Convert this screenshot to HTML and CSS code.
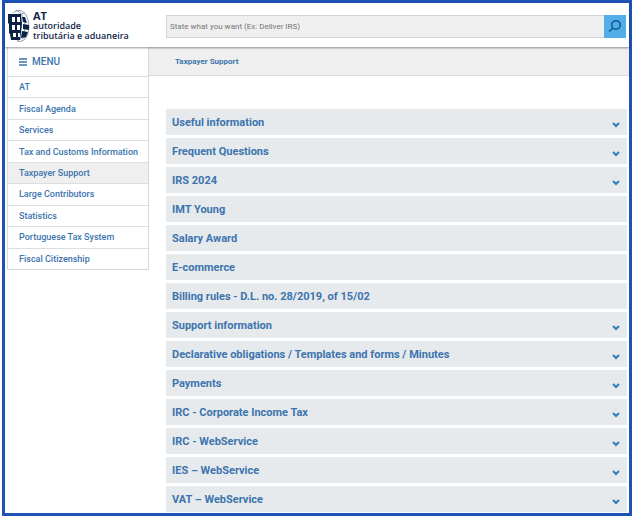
FILE: index.html
```html
<!DOCTYPE html>
<html lang="en">
<head>
    <meta charset="UTF-8">
    <meta name="viewport" content="width=device-width, initial-scale=1.0">
    <title>Taxpayer Support</title>
    <link rel="stylesheet" href="styles.css">
</head>
<body>
<div class="page">

    <header class="header">
        <a class="logo" href="#">
            <svg class="logo-mark" viewBox="0 0 22 34" aria-hidden="true">
                <g fill="none" stroke="#8fa0b5" stroke-width="1">
                    <path d="M5 4 C9 0 15 1 18 6 C22 13 22 24 17 30 C15 32 12 33 9 32"/>
                    <path d="M8 1 C14 4 17 10 17 17 C17 24 14 30 9 32"/>
                    <path d="M12 5 L17 4 M14 30 L19 27"/>
                </g>
                <path d="M0 5 L13 5 L14 15 L13 24 L12 31 L3 31 L2 25 L1 24 L1 15 L0 14 Z" fill="#0d2145"/>
                <path d="M14 8 L17 8 L19 14 L15 13 Z M15 15 L21 16 L21 21 L15 20 Z M14 22 L20 23 L18 28 L13 29 Z" fill="#0d2145"/>
                <path d="M4 8 H7 V13 H4 Z M9 8 H12 V13 H9 Z M4 16 H7 V21 H4 Z M9 16 H12 V21 H9 Z M5 24 H8 V28 H5 Z M10 24 H12 V28 H10 Z" fill="#fff"/>
            </svg>
            <span class="logo-text">
                <span class="logo-short">AT</span>
                <span>autoridade</span>
                <span>tributária e aduaneira</span>
            </span>
        </a>
        <form class="search">
            <input type="text" aria-label="Search" placeholder="State what you want (Ex: Deliver IRS)">
            <button type="button" aria-label="Search">
                <svg viewBox="0 0 14 14" aria-hidden="true">
                    <circle cx="8" cy="6" r="4.3"/>
                    <path d="M5 9 L1 12.5"/>
                </svg>
            </button>
        </form>
    </header>

    <div class="columns">
        <nav class="sidebar">
            <button class="menu-button" type="button">
                <svg viewBox="0 0 8 8" aria-hidden="true"><path d="M0 1 H8 M0 4 H8 M0 7 H8"/></svg>
                MENU
            </button>
            <ul class="menu">
                <li><a href="#">AT</a></li>
                <li><a href="#">Fiscal Agenda</a></li>
                <li><a href="#">Services</a></li>
                <li><a href="#">Tax and Customs Information</a></li>
                <li class="active"><a href="#">Taxpayer Support</a></li>
                <li><a href="#">Large Contributors</a></li>
                <li><a href="#">Statistics</a></li>
                <li><a href="#">Portuguese Tax System</a></li>
                <li><a href="#">Fiscal Citizenship</a></li>
            </ul>
        </nav>

        <main class="content">
            <div class="breadcrumb"><a href="#">Taxpayer Support</a></div>
            <div class="topics">
                <button class="topic expandable" type="button">Useful information</button>
                <button class="topic expandable" type="button">Frequent Questions</button>
                <button class="topic expandable" type="button">IRS 2024</button>
                <a class="topic" href="#">IMT Young</a>
                <a class="topic" href="#">Salary Award</a>
                <a class="topic" href="#">E-commerce</a>
                <a class="topic" href="#">Billing rules - D.L. no. 28/2019, of 15/02</a>
                <button class="topic expandable" type="button">Support information</button>
                <button class="topic expandable" type="button">Declarative obligations / Templates and forms / Minutes</button>
                <button class="topic expandable" type="button">Payments</button>
                <button class="topic expandable" type="button">IRC - Corporate Income Tax</button>
                <button class="topic expandable" type="button">IRC - WebService</button>
                <button class="topic expandable" type="button">IES – WebService</button>
                <button class="topic expandable" type="button">VAT – WebService</button>
            </div>
        </main>
    </div>

</div>
<script>
    // add the arrow to every topic that opens
    document.querySelectorAll(".expandable").forEach(function(topic) {
        topic.insertAdjacentHTML("beforeend",
            '<svg class="chevron" viewBox="0 0 8 6" aria-hidden="true"><path d="M1 1 L4 4 L7 1"/></svg>');
    });
</script>
</body>
</html>
```
FILE: styles.css
```css
* {
    box-sizing: border-box;
}

body {
    margin: 0 2px;
    font-family: Roboto, Arial, sans-serif;
    color: #3d74ad;
    background: #fff;
}

a {
    color: inherit;
    text-decoration: none;
}

button {
    font: inherit;
    color: inherit;
    border: none;
    cursor: pointer;
}

.page {
    border: 3px solid #1f52b5;
}

/* Header with logo and search */
.header {
    position: relative;
    display: flex;
    align-items: center;
    height: 44px;
    padding: 2px 3px 0 0;
    background: #fff;
    box-shadow: 0 1px 2px rgba(0,0,0,0.4);
}

.logo {
    display: flex;
    align-items: center;
    gap: 3px;
    flex: 0 0 161px;
    padding-left: 3px;
    color: #13284c;
}

.logo-mark {
    width: 22px;
    height: 34px;
}

.logo-text {
    display: flex;
    flex-direction: column;
    font: 600 9px/10px "Open Sans", sans-serif;
}

.logo-short {
    font-size: 11px;
    font-weight: bold;
}

.search {
    display: flex;
    flex: 1;
    height: 23px;
}

.search input {
    flex: 1;
    min-width: 0;
    padding: 0 3px;
    font: 8px Roboto, Arial, sans-serif;
    background: #efefef;
    border: 1px solid #d3d5d6;
    border-right: none;
}

.search input::placeholder {
    color: #777;
}

.search button {
    width: 22px;
    padding: 4px;
    background: #52aee9;
}

.search svg {
    display: block;
    width: 14px;
    height: 14px;
    fill: none;
    stroke: #104f88;
    stroke-width: 1.4;
}

/* Side menu */
.columns {
    display: flex;
    align-items: flex-start;
}

.sidebar {
    flex: 0 0 142px;
    margin-left: 2px;
    border: 1px solid #d5d9dd;
    border-top: none;
}

.menu-button {
    display: flex;
    align-items: center;
    gap: 5px;
    width: 100%;
    height: 29px;
    padding: 0 11px;
    font-size: 10px;
    font-weight: 500;
    background: #fff;
}

.menu-button svg {
    width: 8px;
    height: 8px;
    stroke: #3d74ad;
    stroke-width: 1.3;
}

.menu {
    display: grid;
    grid-auto-rows: 1fr;
    height: 193px;
    margin: 0;
    padding: 0;
    list-style: none;
    font-size: 9px;
    font-weight: 500;
}

.menu li {
    display: flex;
    align-items: center;
    padding-left: 11px;
    border-top: 1px solid #dcdfe1;
}

.menu .active {
    background: #efefef;
}

/* Main content */
.content {
    flex: 1;
    min-width: 0;
}

.breadcrumb {
    height: 29px;
    padding-left: 26px;
    font-size: 8px;
    font-weight: bold;
    line-height: 29px;
    background: #efefef;
    border-bottom: 1px solid #d9dcdf;
}

.topics {
    display: flex;
    flex-direction: column;
    gap: 3px;
    padding: 33px 2px 1px 17px;
}

.topic {
    display: flex;
    align-items: center;
    justify-content: space-between;
    height: 26px;
    padding: 0 7px 0 6px;
    font-size: 11px;
    font-weight: bold;
    text-align: left;
    background: #e6eaed;
}

.chevron {
    width: 8px;
    height: 6px;
    margin-top: 6px;
    fill: none;
    stroke: #2c7fb8;
    stroke-width: 2;
}
```
